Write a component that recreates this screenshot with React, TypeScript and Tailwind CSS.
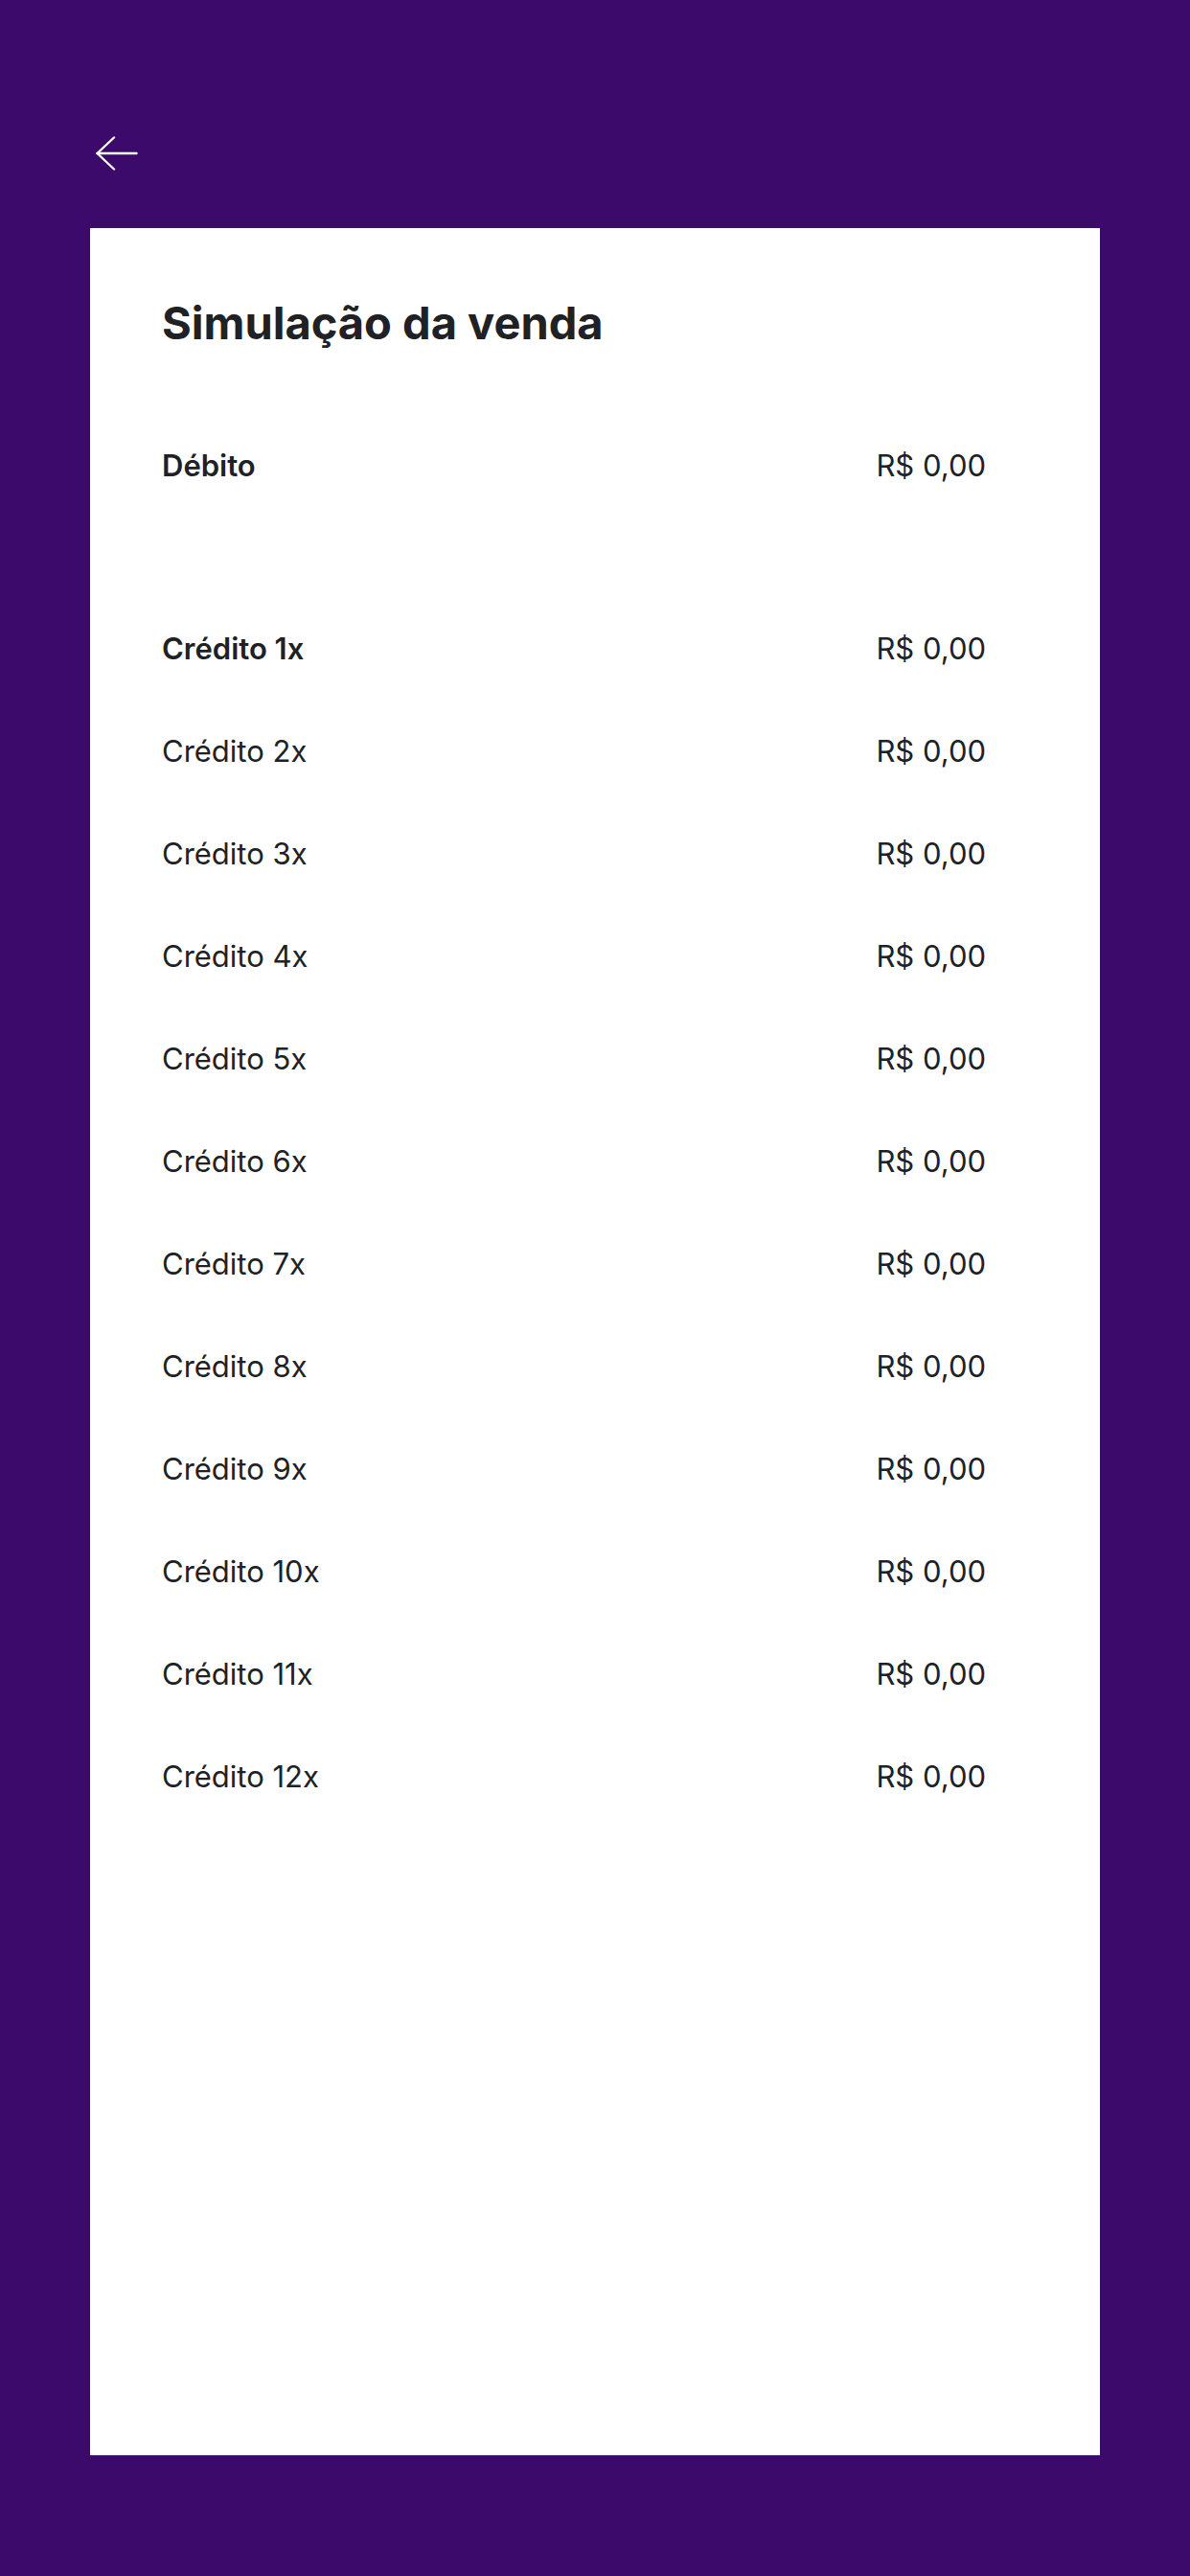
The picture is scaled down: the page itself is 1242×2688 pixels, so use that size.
const ROWS = Array.from({ length: 12 }, (_, i) => ({
  label: `Crédito ${i + 1}x`,
  value: 'R$ 0,00',
  bold: i === 0,
}));

function Row({ label, value, bold }: { label: string; value: string; bold?: boolean }) {
  return (
    <div className="flex items-center justify-between h-[107px]">
      <span className={bold ? 'font-semibold' : 'font-normal'}>{label}</span>
      <span>{value}</span>
    </div>
  );
}

function BackArrow() {
  return (
    <svg width="44" height="36" viewBox="0 0 44 36" fill="none" stroke="currentColor" strokeWidth="2.4" strokeLinecap="round" strokeLinejoin="round">
      <path d="M19 1.5 L1.5 18 L19 34.5" />
      <path d="M1.5 18 H42.5" />
    </svg>
  );
}

export default function App() {
  return (
    <div
      className="min-h-[2688px] w-full bg-[#3c0a6a] flex flex-col"
      style={{ fontFamily: 'Inter, Roboto, "Noto Sans", sans-serif' }}
    >
      {/* Top bar */}
      <div className="h-[238px] pl-[100px] pt-[142px]">
        <button aria-label="Voltar" className="block text-white">
          <BackArrow />
        </button>
      </div>

      {/* Card */}
      <div className="mx-[94px] h-[2324px] bg-white pl-[75px] pr-[119px] text-[#202124] text-[31px] leading-none">
        <h1 className="pt-[75px] text-[47px] font-bold leading-none">
          Simulação da venda
        </h1>

        <div className="mt-[72px]">
          <Row label="Débito" value="R$ 0,00" bold />
        </div>

        <div className="mt-[84px]">
          {ROWS.map((r) => (
            <Row key={r.label} {...r} />
          ))}
        </div>
      </div>
    </div>
  );
}
